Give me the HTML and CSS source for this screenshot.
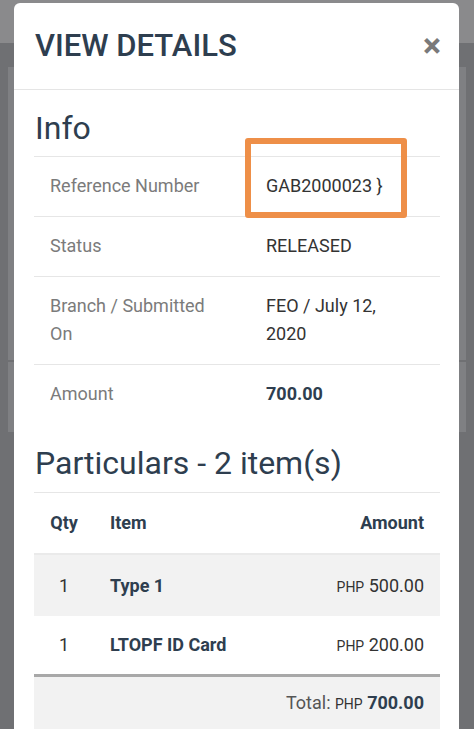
FILE: index.html
```html
<!DOCTYPE html>
<html>
<head>
<meta charset="utf-8">
<link rel="stylesheet" href="styles.css">
</head>
<body>
<div class="backdrop">
  <div class="bg-bar"></div>
  <div class="bg-card bg-card-1"></div>
  <div class="bg-card bg-card-2"></div>
</div>
<div class="modal">
  <div class="modal-header">
    <h1 class="modal-title">VIEW DETAILS</h1>
    <span class="close">&times;</span>
  </div>
  <div class="modal-body">
    <h2 class="section-title">Info</h2>
    <table class="info-table">
      <tr><td class="lbl">Reference Number</td><td class="val">GAB2000023 }</td></tr>
      <tr><td class="lbl">Status</td><td class="val">RELEASED</td></tr>
      <tr><td class="lbl">Branch / Submitted On</td><td class="val">FEO / July 12, 2020</td></tr>
      <tr><td class="lbl">Amount</td><td class="val strong">700.00</td></tr>
    </table>
    <h2 class="section-title particulars">Particulars - 2 item(s)</h2>
    <table class="items-table">
      <thead>
        <tr><th class="qty">Qty</th><th class="item">Item</th><th class="amt">Amount</th></tr>
      </thead>
      <tbody>
        <tr class="stripe"><td class="qty">1</td><td class="item name">Type 1</td><td class="amt"><span class="cur">PHP</span> 500.00</td></tr>
        <tr class="row2"><td class="qty">1</td><td class="item name">LTOPF ID Card</td><td class="amt"><span class="cur">PHP</span> 200.00</td></tr>
      </tbody>
      <tfoot>
        <tr><td colspan="3" class="total"><span class="total-lbl">Total:</span> <span class="cur">PHP</span> <b>700.00</b></td></tr>
      </tfoot>
    </table>
    <div class="highlight"></div>
  </div>
</div>
</body>
</html>
```
FILE: styles.css
```css
* { box-sizing: border-box; }
html, body { margin: 0; padding: 0; }
body {
  width: 474px;
  height: 729px;
  overflow: hidden;
  background: #6f7073;
  font-family: Roboto, "Noto Sans", sans-serif;
  position: relative;
}
.backdrop {
  position: absolute;
  inset: 0;
}
.bg-bar {
  height: 43px;
  background: #8a8a8c;
}
.bg-card {
  margin: 0 8px;
  background: #7f8083;
}
.bg-card-1 { margin-top: 24px; height: 293px; }
.bg-card-2 { margin-top: 2px; height: 70px; }

.modal {
  position: absolute;
  left: 14px;
  top: 3px;
  width: 445px;
  height: 740px;
  background: #fff;
  border-radius: 6px;
}
.modal-header {
  height: 87px;
  border-bottom: 1px solid #e5e5e5;
  display: flex;
  align-items: center;
  justify-content: space-between;
  padding: 0 18px 0 21px;
}
.modal-title {
  margin: 0;
  font-size: 31px;
  font-weight: 500;
  color: #2e3e4f;
  padding-bottom: 2px;
}
.close {
  font-size: 34px;
  font-weight: 700;
  color: #7a7a7a;
  line-height: 1;
  padding-bottom: 2px;
}
.modal-body {
  padding: 0 19px 0 20px;
  position: relative;
}
.section-title {
  margin: 0;
  font-weight: 400;
  color: #2e3e4f;
  font-size: 32px;
  line-height: 36px;
  padding-left: 1px;
}
.section-title:first-child {
  padding-top: 20px;
  padding-bottom: 10px;
}
.info-table, .items-table {
  width: 100%;
  border-collapse: collapse;
  font-size: 18px;
}
.info-table td {
  border-top: 1px solid #e6e6e6;
  padding: 15px 16px 16px;
  line-height: 28px;
  vertical-align: top;
}
.info-table .lbl {
  width: 216px;
  color: #7b7b7b;
  padding-right: 30px;
}
.info-table .val {
  color: #333;
  padding-right: 32px;
}
.info-table .strong {
  font-weight: 700;
  color: #2e3e4f;
}
.particulars {
  padding-top: 21px;
  padding-bottom: 11px;
}
.items-table th {
  border-top: 1px solid #e6e6e6;
  border-bottom: 2px solid #eaeaea;
  font-weight: 700;
  color: #2e3e4f;
  height: 61px;
  padding: 0 16px;
}
.items-table td {
  height: 62px;
  padding: 0 16px;
  color: #333;
}
.items-table .row2 td { height: 60px; }
.items-table .qty { width: 60px; text-align: center; padding: 0; }
.items-table .item { text-align: left; }
.items-table .amt { text-align: right; }
.items-table .name { font-weight: 700; color: #2e3e4f; }
.stripe td { background: #f2f2f2; }
.cur { font-size: 14px; }
.items-table tfoot td {
  border-top: 3px solid #a8a8a8;
  background: #f2f2f2;
  height: 53px;
  text-align: right;
}
.total-lbl { color: #555; }
.total b { color: #2e3e4f; }

.highlight {
  position: absolute;
  left: 231px;
  top: 48px;
  width: 162px;
  height: 80px;
  border: 6px solid #ee8f48;
  border-radius: 3px;
}
```
